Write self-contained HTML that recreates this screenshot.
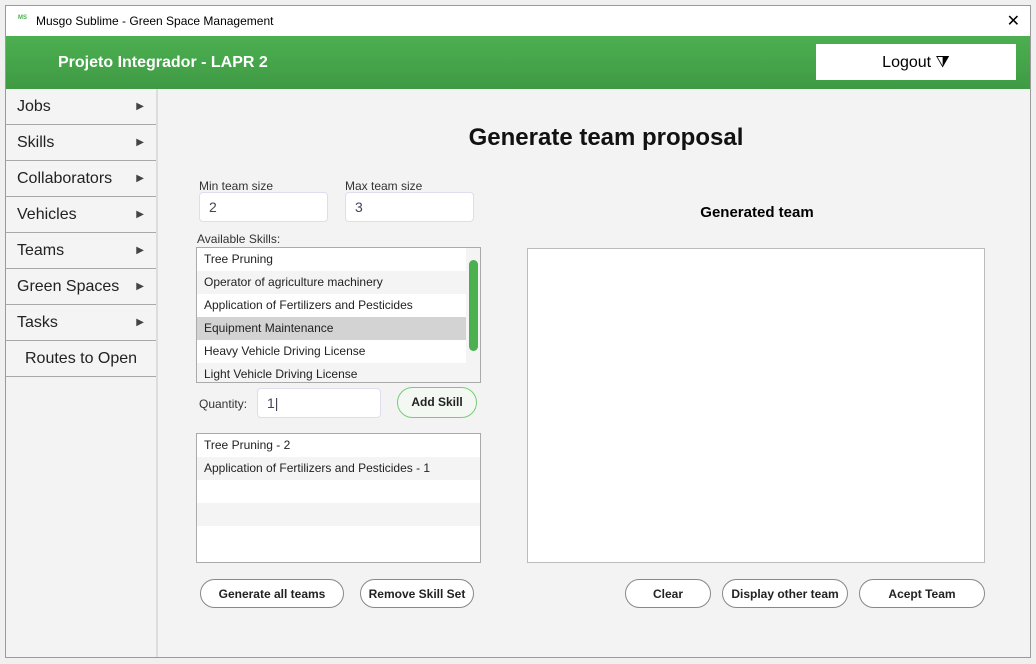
<!DOCTYPE html><html><head><style>
body{margin:0;width:1036px;height:664px;background:#f0f0f0;font-family:"Liberation Sans",sans-serif;position:relative;overflow:hidden}
.win{position:absolute;left:5px;top:5px;width:1024px;height:651px;border:1px solid #9a9a9a;background:#f3f3f3;overflow:hidden}
.a{position:absolute}
.tb{left:0;top:0;width:1024px;height:30px;background:#fff;font-size:12px}
.hd{left:0;top:30px;width:1024px;height:53px;background:linear-gradient(#4caf50,#3f9a44)}
.side{left:0;top:83px;width:150px;height:568px;background:#f3f3f3;border-right:2px solid #ddd}
.it{height:35px;border-bottom:1px solid #a8a8a8;font-size:16px;color:#222;line-height:35px;padding-left:11px;position:relative;background:#f4f4f4}
.it span{position:absolute;right:12px;font-size:10px;color:#444}
.inp{background:#fff;border:1px solid #dde;border-radius:4px;font-size:14px;color:#445;line-height:28px;padding-left:9px;box-sizing:border-box;height:30px}
.lbl{font-size:12px;color:#333}
.row{height:23px;line-height:23px;font-size:12px;padding-left:7px;color:#222}
.btn{border:1px solid #888;border-radius:16px;background:#fff;font-size:12px;font-weight:bold;text-align:center;line-height:29px;height:29px;color:#222;box-sizing:border-box}
</style></head><body><div class="win">
<div class="a tb"><span class="a" style="left:12px;top:9px;color:#4caf50;font-size:6px;font-weight:bold">MS</span><span class="a" style="left:30px;top:8px">Musgo Sublime - Green Space Management</span><span class="a" style="right:10px;top:5px;font-size:16px">✕</span></div>
<div class="a hd"><span class="a" style="left:52px;top:18px;color:#fff;font-size:16px;font-weight:bold">Projeto Integrador - LAPR 2</span>
<div class="a" style="left:810px;top:8px;width:200px;height:36px;background:#fff;text-align:center;line-height:38px;font-size:16px">Logout ⧩</div></div>
<div class="a side">
<div class="it">Jobs<span>▶</span></div><div class="it">Skills<span>▶</span></div><div class="it">Collaborators<span>▶</span></div><div class="it">Vehicles<span>▶</span></div><div class="it">Teams<span>▶</span></div><div class="it">Green Spaces<span>▶</span></div><div class="it">Tasks<span>▶</span></div><div class="it" style="padding-left:19px">Routes to Open</div></div>
<div class="a" style="left:152px;top:118px;width:896px;text-align:center;font-size:24px;font-weight:bold;color:#111">Generate team proposal</div>
<div class="a lbl" style="left:193px;top:173px">Min team size</div><div class="a lbl" style="left:339px;top:173px">Max team size</div>
<div class="a inp" style="left:193px;top:186px;width:129px">2</div><div class="a inp" style="left:339px;top:186px;width:129px">3</div>
<div class="a lbl" style="left:191px;top:226px">Available Skills:</div>
<div class="a" style="left:190px;top:241px;width:283px;height:134px;border:1px solid #aaa;background:#f4f4f4;overflow:hidden">
<div style="width:269px"><div class="row" style="background:#fff">Tree Pruning</div><div class="row">Operator of agriculture machinery</div><div class="row" style="background:#fff">Application of Fertilizers and Pesticides</div><div class="row" style="background:#d3d3d3">Equipment Maintenance</div><div class="row" style="background:#fff">Heavy Vehicle Driving License</div><div class="row">Light Vehicle Driving License</div></div>
<div class="a" style="left:272px;top:12px;width:9px;height:91px;background:#4caf50;border-radius:5px"></div></div>
<div class="a lbl" style="left:193px;top:391px">Quantity:</div>
<div class="a inp" style="left:251px;top:382px;width:124px">1|</div>
<div class="a btn" style="left:391px;top:381px;width:80px;height:31px;line-height:29px;border-color:#7c7;background:#f3f8f3">Add Skill</div>
<div class="a" style="left:190px;top:427px;width:283px;height:128px;border:1px solid #aaa;background:#fff">
<div class="row">Tree Pruning - 2</div><div class="row" style="background:#f4f4f4">Application of Fertilizers and Pesticides - 1</div><div class="row"></div><div class="row" style="background:#f4f4f4"></div><div class="row"></div></div>
<div class="a btn" style="left:194px;top:573px;width:144px">Generate all teams</div>
<div class="a btn" style="left:354px;top:573px;width:114px">Remove Skill Set</div>
<div class="a" style="left:522px;top:198px;width:458px;text-align:center;font-size:15px;font-weight:bold">Generated team</div>
<div class="a" style="left:521px;top:242px;width:456px;height:313px;border:1px solid #bbb;background:#fff"></div>
<div class="a btn" style="left:619px;top:573px;width:86px">Clear</div>
<div class="a btn" style="left:716px;top:573px;width:126px">Display other team</div>
<div class="a btn" style="left:853px;top:573px;width:126px">Acept Team</div>
</div></body></html>
